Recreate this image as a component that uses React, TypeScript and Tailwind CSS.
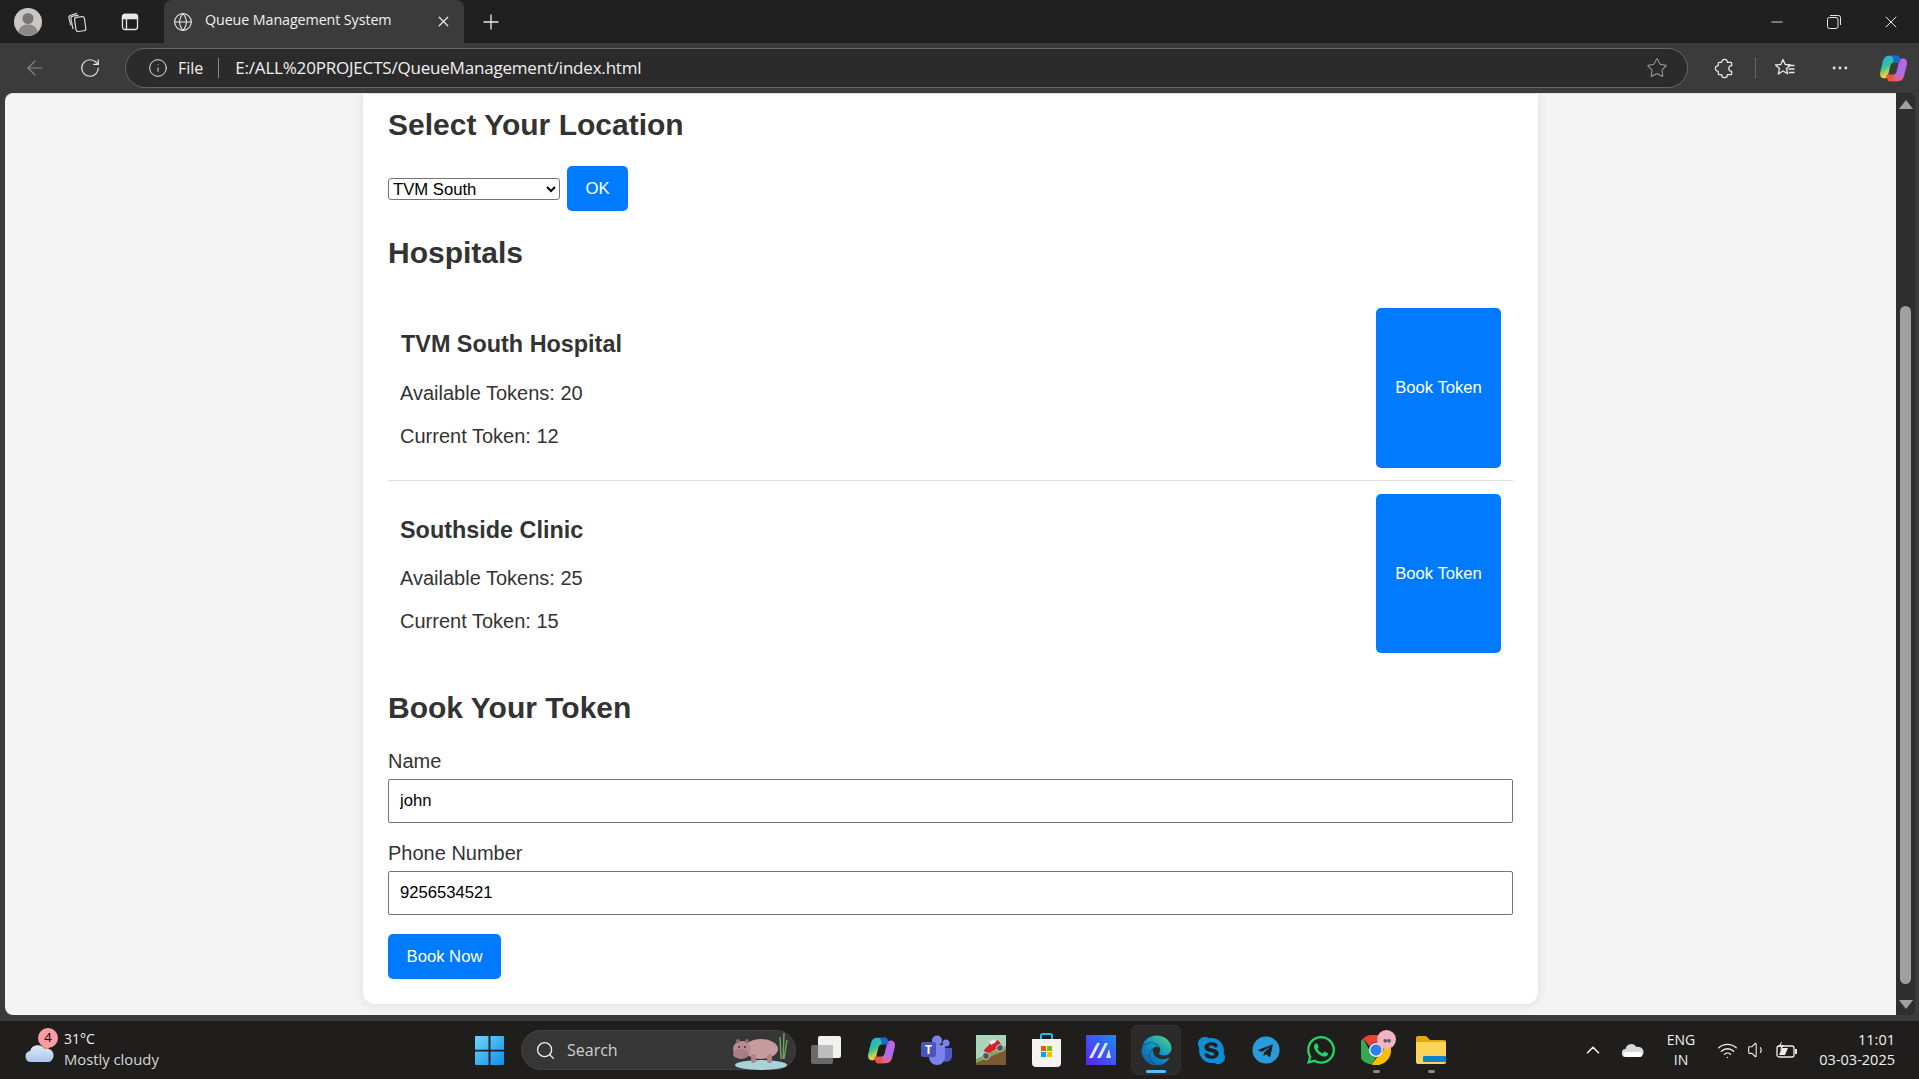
import { ArrowLeft, ChevronUp, Globe, Info, Minus, MoreHorizontal, Plus, RotateCw, Search, Star, Volume1, Wifi, X } from "lucide-react";
import { FaSkype, FaWhatsapp, FaTelegram, FaEdge } from "react-icons/fa";

const hospitals = [
  { name: "TVM South Hospital", available: 20, current: 12, nameClass: "pl-[13px]", rowClass: "border-b border-[#ddd]", tokensClass: "mt-[24px]", buttonClass: "h-[160px]" },
  { name: "Southside Clinic", available: 25, current: 15, nameClass: "pl-3", rowClass: "", tokensClass: "mt-[23px]", buttonClass: "h-[159px]" },
];

const CopilotLogo = ({ size, id }: { size: number; id: string }) => (
  <svg width={size} height={size} viewBox="0 0 32 32">
    <defs>
      <linearGradient id={`${id}a`} x1="0" y1="0" x2="0.5" y2="1">
        <stop offset="0" stopColor="#1fa9f4" />
        <stop offset="0.5" stopColor="#36c48f" />
        <stop offset="0.8" stopColor="#f5d13b" />
        <stop offset="1" stopColor="#f59a3c" />
      </linearGradient>
      <linearGradient id={`${id}b`} x1="0.4" y1="0" x2="0.7" y2="1">
        <stop offset="0" stopColor="#d05ee0" />
        <stop offset="0.6" stopColor="#a76cf0" />
        <stop offset="1" stopColor="#f2607a" />
      </linearGradient>
    </defs>
    <path d="M11 2h9c1 0 2 .7 2.300 1.700L24 9h-7c-3 0-4 2-4.500 4l-2.700 11c-.5 2-2 3-4 3-3.500 0-5.300-3-4.600-6.500L4 9c1-4.500 3-7 7-7z" fill={`url(#${id}a)`} />
    <path d="M21 30h-9c-1 0-2-.7-2.300-1.700L8 23h7c3 0 4-2 4.500-4l2.700-11c.5-2 2-3 4-3 3.500 0 5.300 3 4.600 6.500L28 23c-1 4.500-3 7-7 7z" fill={`url(#${id}b)`} />
    <path d="M14 2h6c1 0 2 .7 2.300 1.700L24 9h-8c0-3-1-6-2-7z" fill="#1767d8" />
    <path d="M18 30h-6c-1 0-2-.7-2.300-1.700L8 23h9c0 3 0 6 1 7z" fill="#f0553c" />
  </svg>
);

const WorkspacesIcon = () => (
  <svg width="22" height="22" viewBox="0 0 20 20" fill="none" stroke="#d8d8d8" strokeWidth="1.100">
    <rect x="7.500" y="5.500" width="9" height="13" rx="2" transform="rotate(-8 11 12)" />
    <path d="M5.500 16.500 3.600 7.500c-.3-1.500.4-2.500 1.700-2.800L10.500 3.700" />
    <path d="M3.500 13 1.800 6.500c-.3-1.300.3-2.300 1.500-2.600L9 2.200" />
  </svg>
);

const PanelIcon = () => (
  <svg width="18" height="18" viewBox="0 0 18 18" fill="none" stroke="#e8e8e8" strokeWidth="1.300">
    <rect x="1.500" y="1.500" width="15" height="15" rx="2.500" />
    <path d="M1.500 3.500a2 2 0 0 1 2-2h11a2 2 0 0 1 2 2v2h-15z" fill="#e8e8e8" />
    <path d="M5.500 5.500v11" />
  </svg>
);

const RestoreIcon = () => (
  <svg width="14" height="14" viewBox="0 0 14 14" fill="none" stroke="#e8e8e8" strokeWidth="1">
    <rect x="0.500" y="2.500" width="10.500" height="11" rx="2" />
    <path d="M3 .5h8.500a2 2 0 0 1 2 2V10" />
  </svg>
);

const PuzzleIcon = () => (
  <svg width="23" height="23" viewBox="0 0 24 24" fill="none" stroke="#e8e8e8" strokeWidth="1.300" strokeLinejoin="round">
    <path d="M9 5.500a3 3 0 0 1 6 0h3.500a1 1 0 0 1 1 1V9a3 3 0 0 0 0 6v2.500a1 1 0 0 1-1 1H15a3 3 0 0 1-6 0H6.500a1 1 0 0 1-1-1V15a3 3 0 0 1 0-6V6.500a1 1 0 0 1 1-1z" />
  </svg>
);

const FavoritesIcon = () => (
  <svg width="22" height="22" viewBox="0 0 22 22" fill="none" stroke="#e8e8e8" strokeWidth="1.300">
    <path d="M9 2.500l2.200 5 5.300.4-4 3.600 1.200 5.300L9 14l-4.700 3 1.200-5.400-4-3.700 5.300-.4z" strokeLinejoin="round" />
    <path d="M14 8.500h6.500M14.500 12h6M15 15.500h5.500" />
  </svg>
);

const AvatarIcon = () => (
  <svg width="28" height="28" viewBox="0 0 28 28">
    <circle cx="14" cy="14" r="14" fill="#c9c7c3" />
    <circle cx="14" cy="10.500" r="5.500" fill="#777" />
    <path d="M4.500 24c1-5.500 5-7.500 9.500-7.500s8.500 2 9.500 7.500a14 14 0 0 1-19 0z" fill="#8a8986" />
  </svg>
);

const WeatherIcon = () => (
  <svg width="32" height="24" viewBox="0 0 32 24">
    <defs>
      <linearGradient id="cloudFill" x1="0" y1="0" x2="0" y2="1">
        <stop offset="0" stopColor="#dfe9f7" />
        <stop offset="1" stopColor="#a9c6ee" />
      </linearGradient>
    </defs>
    <circle cx="22" cy="5" r="4" fill="#f08a24" />
    <path d="M7 22a5.500 5.500 0 0 1-1-10.900A8 8 0 0 1 20.500 9 6.500 6.500 0 0 1 25 22z" fill="url(#cloudFill)" />
  </svg>
);

const WindowsLogo = () => (
  <svg width="29" height="29" viewBox="0 0 29 29">
    <defs>
      <linearGradient id="winFill" x1="0" y1="0" x2="1" y2="1">
        <stop offset="0" stopColor="#6fd6fb" />
        <stop offset="1" stopColor="#0f8ee9" />
      </linearGradient>
    </defs>
    <path d="M1 0h12.500v13.800H0V1a1 1 0 0 1 1-1zM15.500 0H28a1 1 0 0 1 1 1v12.800H15.500zM0 15.500h13.500V29H1a1 1 0 0 1-1-1zM15.500 15.500H29V28a1 1 0 0 1-1 1H15.500z" fill="url(#winFill)" />
  </svg>
);

const HippoArt = () => (
  <svg width="62" height="40" viewBox="0 0 62 40">
    <ellipse cx="32" cy="35" rx="26" ry="5" fill="#a8d4d8" />
    <path d="M51 7l1 22M55 3l-1 26M58 10l-3 19" stroke="#6f9e63" strokeWidth="1.500" fill="none" />
    <ellipse cx="32" cy="19" rx="17" ry="10" fill="#c59c9f" />
    <rect x="22" y="24" width="5" height="9" rx="2" fill="#ad8488" />
    <rect x="38" y="24" width="5" height="9" rx="2" fill="#ad8488" />
    <ellipse cx="13" cy="19" rx="9" ry="8" fill="#b88d92" />
    <ellipse cx="12" cy="24" rx="8" ry="5" fill="#a77f84" />
    <circle cx="9" cy="11" r="2" fill="#8f6d72" />
    <circle cx="18" cy="11" r="2" fill="#8f6d72" />
    <circle cx="10" cy="17" r="1" fill="#333" />
    <circle cx="16" cy="17" r="1" fill="#333" />
  </svg>
);

const TaskViewIcon = () => (
  <svg width="30" height="28" viewBox="0 0 30 28">
    <rect x="0" y="9" width="22" height="19" rx="2" fill="#6a6a6a" />
    <rect x="7" y="0" width="23" height="22" rx="2" fill="#f1f1f1" />
    <rect x="7" y="9" width="15" height="13" fill="#bdbdbd" />
  </svg>
);

const TeamsIcon = () => (
  <svg width="31" height="30" viewBox="0 0 31 30">
    <circle cx="25" cy="8" r="3.500" fill="#7b83eb" />
    <path d="M20 13h10a1 1 0 0 1 1 1v7a6 6 0 0 1-9 5z" fill="#5059c9" />
    <circle cx="16" cy="5.500" r="5" fill="#7b83eb" />
    <path d="M8 10h15a1 1 0 0 1 1 1v11a8 8 0 0 1-16 0z" fill="#7b83eb" />
    <rect x="0" y="7" width="15" height="15" rx="2" fill="#4b53bc" />
    <text x="7.500" y="19" textAnchor="middle" fontSize="12" fontWeight="700" fill="#fff" fontFamily="'Open Sans', sans-serif">T</text>
  </svg>
);

const GameIcon = () => (
  <svg width="30" height="30" viewBox="0 0 30 30">
    <rect width="30" height="30" fill="#a9d6b8" />
    <path d="M0 27 30 14v16H0z" fill="#7a5a33" />
    <path d="M0 24 30 11v4L0 28z" fill="#7fa35b" />
    <path d="M8 15l5-5 1-3h5l3-2 3 4-1 3-14 8z" fill="#d3212d" />
    <path d="M13 7l5-3 2 3-5 3z" fill="#e8e8e8" />
    <circle cx="10" cy="21" r="3.500" fill="#555" stroke="#ccc" />
    <circle cx="24" cy="13" r="3.500" fill="#555" stroke="#ccc" />
  </svg>
);

const StoreIcon = () => (
  <svg width="29" height="34" viewBox="0 0 29 34">
    <path d="M9 6V2.500A1.500 1.500 0 0 1 10.500 1h8A1.500 1.500 0 0 1 20 2.500V6" fill="none" stroke="#2fb4ee" strokeWidth="2" />
    <path d="M0 6h29v24a4 4 0 0 1-4 4H4a4 4 0 0 1-4-4z" fill="#f3f3f3" />
    <rect x="9" y="13" width="5" height="5" fill="#f25022" />
    <rect x="15" y="13" width="5" height="5" fill="#7fba00" />
    <rect x="9" y="19" width="5" height="5" fill="#00a4ef" />
    <rect x="15" y="19" width="5" height="5" fill="#ffb900" />
  </svg>
);

const MailAppIcon = () => (
  <svg width="30" height="30" viewBox="0 0 30 30">
    <defs>
      <linearGradient id="mFill" x1="0" y1="1" x2="1" y2="0">
        <stop offset="0" stopColor="#5b21f5" />
        <stop offset="1" stopColor="#1d8cf0" />
      </linearGradient>
    </defs>
    <rect width="30" height="30" fill="url(#mFill)" />
    <path d="M3 23 11 8h3L6.500 23zM11 23 19 8h3l-7.500 15z" fill="#ffffff" opacity="0.85" />
    <path d="M20 23l3-9 2 9z" fill="#ffffff" opacity="0.85" />
  </svg>
);

const ChromeIcon = () => (
  <svg width="30" height="30" viewBox="0 0 30 30">
    <path d="M15 0a15 15 0 0 1 13 7.500H15a7.500 7.500 0 0 0-6.500 3.800L2 3.600A15 15 0 0 1 15 0z" fill="#ea4335" />
    <path d="M2 3.600l6.500 11.400a7.500 7.500 0 0 0 6.500 7.500l-4.500 7A15 15 0 0 1 2 3.600z" fill="#34a853" />
    <path d="M28 7.500a15 15 0 0 1-17.500 22l6-7.800A7.500 7.500 0 0 0 21.500 11L15 7.500z" fill="#fbbc04" />
    <circle cx="15" cy="15" r="6.300" fill="#2f7df0" stroke="#fff" strokeWidth="1.300" />
  </svg>
);

const FolderIcon = () => (
  <svg width="30" height="28" viewBox="0 0 30 28">
    <path d="M0 2a2 2 0 0 1 2-2h8l4 4h14a2 2 0 0 1 2 2v4H0z" fill="#e6a817" />
    <path d="M0 6h30v20a2 2 0 0 1-2 2H2a2 2 0 0 1-2-2z" fill="#fcd55a" />
    <rect x="7" y="20" width="23" height="6" rx="1" fill="#0f7fd4" />
  </svg>
);

const OneDriveIcon = () => (
  <svg width="22" height="14" viewBox="0 0 22 14">
    <path d="M4 14a4 4 0 0 1-.5-8A6 6 0 0 1 14.500 4 4.500 4.500 0 0 1 18 14z" fill="#d9d9d9" />
    <path d="M4 14a2.500 2.500 0 0 1 0-5h14a2.500 2.500 0 0 1 0 5z" fill="#ffffff" />
  </svg>
);

const BatteryIcon = () => (
  <svg width="22" height="18" viewBox="0 0 22 18" fill="none">
    <rect x="1" y="5" width="17" height="11" rx="2" stroke="#eee" strokeWidth="1.300" />
    <rect x="19" y="8" width="2" height="5" fill="#eee" />
    <path d="M3 14h6l3-7H6z" fill="#eee" />
    <path d="M6 0 2 6h3l-1 4 4-6H5z" fill="#eee" />
  </svg>
);

const TaskIcon = ({ children, active, dot }: { children: React.ReactNode; active?: boolean; dot?: boolean }) => (
  <div className="relative flex h-[50px] w-[50px] items-center justify-center mx-[2.500px]">
    {active && <div className="absolute inset-0 rounded-md border border-[#2e2e2e] bg-[#2b2b2b]" />}
    <div className="relative flex items-center justify-center">{children}</div>
    {active && <div className="absolute bottom-[2px] h-[3px] w-5 rounded-full bg-[#4cc2ff]" />}
    {dot && <div className="absolute bottom-[2px] h-[3px] w-[7px] rounded-full bg-[#8a8a8a]" />}
  </div>
);

const primaryButton = "rounded-[5px] bg-[#007bff] text-[16.670px] text-white";
const headingClass = "h-[34px] text-[30px] leading-[34px] font-bold text-[#333]";

export default function App() {
  return (
    <div className="flex h-screen flex-col overflow-hidden bg-[#3b3b3b] font-['Liberation_Sans',sans-serif]">
      {/* title bar */}
      <div className="flex h-[43px] shrink-0 items-center bg-[#202020] font-['Open_Sans',sans-serif] text-[#e8e8e8]">
        <div className="flex w-[52px] justify-center pl-1"><AvatarIcon /></div>
        <div className="flex w-[51px] justify-center"><WorkspacesIcon /></div>
        <div className="flex w-[54px] justify-center"><PanelIcon /></div>
        <div className="ml-[7px] flex h-[43px] w-[300px] items-center rounded-t-lg bg-[#3b3b3b] pl-[9px]">
          <Globe size={20} strokeWidth={1.300} className="text-[#e8e8e8]" />
          <span className="ml-[12px] pb-[2px] text-[14.300px] leading-none tracking-[-0.100px] text-[#f0f0f0]">Queue Management System</span>
          <X size={17} strokeWidth={1.800} className="ml-auto mr-3" />
        </div>
        <div className="flex w-[54px] justify-center"><Plus size={24} strokeWidth={1.300} /></div>
        <div className="flex-1" />
        <div className="flex w-[57px] justify-center"><Minus size={18} strokeWidth={1.200} /></div>
        <div className="flex w-[57px] justify-center"><RestoreIcon /></div>
        <div className="flex w-[57px] justify-center"><X size={20} strokeWidth={1.200} /></div>
      </div>

      {/* toolbar */}
      <div className="flex h-[50px] shrink-0 items-center bg-[#3b3b3b] font-['Open_Sans',sans-serif]">
        <div className="flex w-[70px] justify-center"><ArrowLeft size={24} strokeWidth={1.100} className="text-[#8a8a8a]" /></div>
        <div className="flex w-[40px] justify-center"><RotateCw size={22} strokeWidth={1.300} className="text-[#e8e8e8]" /></div>
        <div className="ml-[15px] flex h-[40px] w-[1563px] items-center rounded-full border border-[#666] bg-[#2b2b2b] pl-[22px] pr-[19px] text-[#f0f0f0]">
          <Info size={20} strokeWidth={1.200} className="text-[#e0e0e0]" />
          <span className="ml-[10px] pb-[1px] text-[16px] leading-none">File</span>
          <div className="ml-[15px] h-[20px] w-px bg-[#8a8a8a]" />
          <span className="ml-[16px] pb-[1px] text-[17px] leading-none tracking-[-0.200px]">E:/ALL%20PROJECTS/QueueManagement/index.html</span>
          <Star size={22} strokeWidth={1.100} className="ml-auto text-[#a0a0a0]" />
        </div>
        <div className="ml-[12px] flex w-[48px] justify-center"><PuzzleIcon /></div>
        <div className="ml-[7px] h-[20px] w-px bg-[#666]" />
        <div className="ml-[4px] flex w-[50px] justify-center"><FavoritesIcon /></div>
        <div className="ml-[5px] flex w-[50px] justify-center"><MoreHorizontal size={20} strokeWidth={1.500} className="text-[#e8e8e8]" /></div>
        <div className="ml-[5px] flex w-[46px] justify-center"><CopilotLogo size={29} id="cpTop" /></div>
      </div>

      {/* viewport */}
      <div className="flex min-h-0 flex-1 pl-[5px] pr-1">
        <div className="min-w-0 flex-1 overflow-hidden rounded-l-lg border-t border-[#e0e0e0] bg-[#f4f4f4]">
          <div className="mx-auto w-[1175px] rounded-b-xl bg-white px-[25px] pb-[25px] pt-[14px] text-[#333] shadow-[0_0_12px_rgba(0,0,0,0.1)]">
            <h2 className={headingClass}>Select Your Location</h2>
            <div className="mt-[24px] flex items-center">
              <select defaultValue="TVM South" className="h-[22px] w-[172px] rounded-[3px] border border-[#767676] bg-white text-[16.670px] leading-none text-black">
                <option>TVM South</option>
                <option>TVM North</option>
              </select>
              <button className={`ml-[7px] h-[45px] w-[61px] ${primaryButton}`}>OK</button>
            </div>
            <h2 className={`mt-[25px] ${headingClass}`}>Hospitals</h2>
            <div className="mt-[25px]">
              {hospitals.map((h) => (
                <div key={h.name} className={`flex items-center justify-between py-[12.500px] pr-3 ${h.rowClass}`}>
                  <div className="pt-[3px]">
                    <h3 className={`h-[27px] text-[23.400px] leading-[27px] font-bold ${h.nameClass}`}>{h.name}</h3>
                    <p className={`${h.tokensClass} pl-3 text-[20px] leading-[23px]`}>Available Tokens: {h.available}</p>
                    <p className="mt-[20px] pl-3 text-[20px] leading-[23px]">Current Token: {h.current}</p>
                  </div>
                  <button className={`${h.buttonClass} w-[125px] ${primaryButton}`}>Book Token</button>
                </div>
              ))}
            </div>
            <h2 className={`mt-[26px] ${headingClass}`}>Book Your Token</h2>
            <label className="mt-[25px] block text-[20px] leading-[23px]">Name</label>
            <input readOnly value="john" className="mt-[6px] block h-[44px] w-full rounded-[2px] border border-[#767676] px-[11px] text-[16.670px] text-black" />
            <label className="mt-[19px] block text-[20px] leading-[23px]">Phone Number</label>
            <input readOnly value="9256534521" className="mt-[6px] block h-[44px] w-full rounded-[2px] border border-[#767676] px-[11px] text-[16.670px] text-black" />
            <button className={`mt-[19px] block h-[45px] w-[113px] ${primaryButton}`}>Book Now</button>
          </div>
        </div>

        {/* scrollbar */}
        <div className="flex w-[19px] shrink-0 flex-col items-center rounded-r-md bg-[#2e2e2e]">
          <div className="mt-[7px] h-0 w-0 border-x-[7px] border-b-[9px] border-x-transparent border-b-[#a0a0a0]" />
          <div className="mt-[197px] h-[678px] w-[11px] rounded-full bg-[#a0a0a0]" />
          <div className="mt-auto mb-[6px] h-0 w-0 border-x-[7px] border-t-[9px] border-x-transparent border-t-[#a0a0a0]" />
        </div>
      </div>

      <div className="h-[6px] shrink-0 bg-[#3b3b3b]" />

      {/* taskbar */}
      <div className="flex h-[58px] shrink-0 items-center bg-[#1f1e1c] font-['Open_Sans',sans-serif] text-[14px] text-[#f0f0f0]">
        <div className="relative ml-[24px] flex w-[40px] items-end self-stretch pb-[15px]">
          <WeatherIcon />
          <div className="absolute left-[14px] top-[7px] flex h-[20px] w-[20px] items-center justify-center rounded-full bg-[#f99ba0] text-[13px] text-black">4</div>
        </div>
        <div className="w-[411px] pb-[2px] leading-[20px]">
          <div className="text-[14px]">31°C</div>
          <div className="text-[14.800px] text-[#d8d8d8]">Mostly cloudy</div>
        </div>
        <WindowsLogo />
        <div className="ml-[17px] mr-[2.500px] flex h-[40px] w-[275px] items-center rounded-full border border-[#444] bg-[#363636] pl-[13px]">
          <Search size={21} strokeWidth={1.500} className="text-[#f0f0f0]" />
          <span className="ml-[11px] text-[16px] text-[#d0d0d0]">Search</span>
          <div className="ml-auto mr-[4px]"><HippoArt /></div>
        </div>
        <TaskIcon><TaskViewIcon /></TaskIcon>
        <TaskIcon><CopilotLogo size={29} id="cpBar" /></TaskIcon>
        <TaskIcon><TeamsIcon /></TaskIcon>
        <TaskIcon><GameIcon /></TaskIcon>
        <TaskIcon><StoreIcon /></TaskIcon>
        <TaskIcon><MailAppIcon /></TaskIcon>
        <TaskIcon active>
          <svg width="0" height="0" className="absolute">
            <defs>
              <linearGradient id="edgeFill" x1="0.1" y1="1" x2="0.9" y2="0">
                <stop offset="0" stopColor="#0c59a4" />
                <stop offset="0.55" stopColor="#1296c9" />
                <stop offset="1" stopColor="#52d67b" />
              </linearGradient>
            </defs>
          </svg>
          <FaEdge size={31} fill="url(#edgeFill)" />
        </TaskIcon>
        <TaskIcon><FaSkype size={31} color="#0b8fd9" /></TaskIcon>
        <TaskIcon><FaTelegram size={28} color="#2a9bd8" /></TaskIcon>
        <TaskIcon><FaWhatsapp size={32} color="#25d366" /></TaskIcon>
        <TaskIcon dot>
          <ChromeIcon />
          <div className="absolute -right-[5px] -top-[5px] flex h-[19px] w-[19px] items-center justify-center rounded-full bg-[#f0b4c4] text-[8px] leading-none tracking-[-1px] text-[#555]">●●</div>
        </TaskIcon>
        <TaskIcon dot><FolderIcon /></TaskIcon>
        <div className="ml-[114.500px] flex w-[40px] justify-center"><ChevronUp size={22} strokeWidth={1.800} className="text-[#f0f0f0]" /></div>
        <div className="flex w-[40px] justify-center"><OneDriveIcon /></div>
        <div className="w-[56px] text-center leading-[20px]">
          <div>ENG</div>
          <div>IN</div>
        </div>
        <div className="ml-[3px] flex w-[30px] justify-center"><Wifi size={21} strokeWidth={1.500} /></div>
        <div className="flex w-[30px] justify-center"><Volume1 size={20} strokeWidth={1.300} /></div>
        <div className="flex w-[30px] justify-center"><BatteryIcon /></div>
        <div className="ml-auto mr-[24px] whitespace-nowrap text-right text-[14.500px] leading-[20px]">
          <div>11:01</div>
          <div>03-03-2025</div>
        </div>
      </div>
    </div>
  );
}
